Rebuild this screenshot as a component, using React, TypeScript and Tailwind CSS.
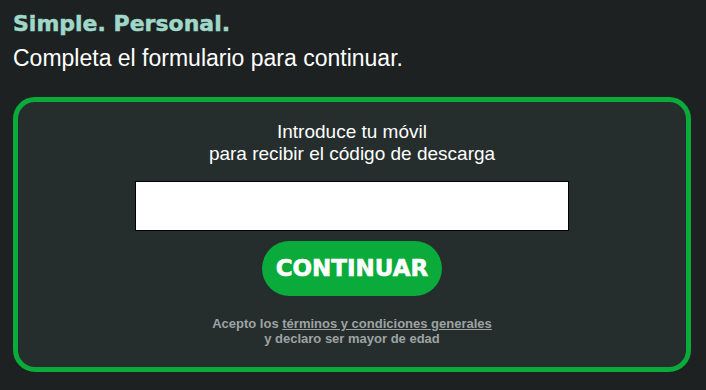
import * as React from "react";

/**
 * Phone form card
 */
function PhoneForm() {
    const [phone, setPhone] = React.useState("");

    return (
        <div className="w-[678px] h-[275px] rounded-[22px] border-[5px] border-[#0aab3b] bg-[#252d2d] flex flex-col items-center pt-[19px]">
            <p className="text-white text-[19px] leading-[22px] text-center">
                Introduce tu móvil
                <br/>
                para recibir el código de descarga
            </p>

            <input
                type="tel"
                value={phone}
                onChange={e => setPhone(e.target.value)}
                className="mt-[16px] w-[434px] h-[50px] bg-white border border-black outline-none px-3 text-black"
            />

            <button
                className="mt-[10px] w-[180px] h-[55px] rounded-full bg-[#0aab3b] text-white text-[23px] font-bold font-['DejaVu_Sans',sans-serif] [-webkit-text-stroke:0.6px_white]"
            >
                CONTINUAR
            </button>

            <p className="mt-[20px] text-[13px] leading-[15px] font-bold text-[#9ea3a3] text-center">
                Acepto los <a href="#" className="underline">términos y condiciones generales</a>
                <br/>
                y declaro ser mayor de edad
            </p>
        </div>
    );
}

export default function App() {
    return (
        <div className="min-h-[390px] bg-[#1e2122] px-[13px] pt-[11px] font-['Liberation_Sans',Arial,sans-serif]">
            <h1 className="text-[#9fd8c8] text-[22px] leading-[26px] font-bold font-['DejaVu_Sans',sans-serif] [-webkit-text-stroke:0.5px_#9fd8c8]">
                Simple. Personal.
            </h1>
            <h2 className="mt-[8px] text-white text-[23px] leading-[27px]">
                Completa el formulario para continuar.
            </h2>

            <div className="mt-[25px]">
                <PhoneForm/>
            </div>
        </div>
    );
}
